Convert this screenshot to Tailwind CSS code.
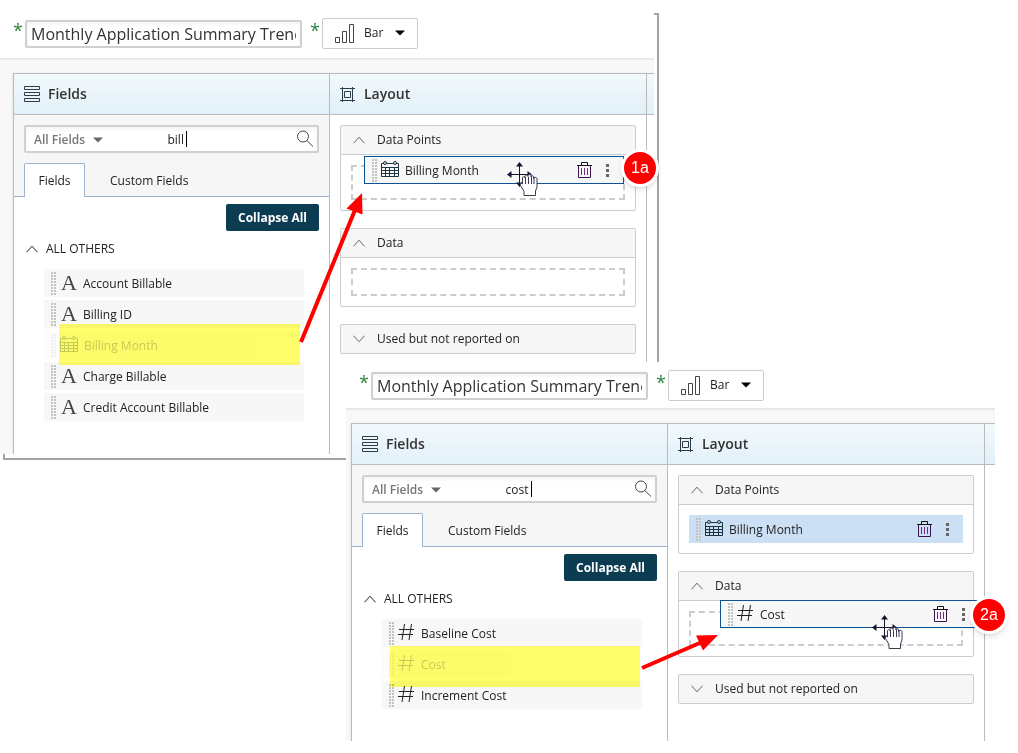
<!DOCTYPE html>
<html lang="en">
<head>
    <meta charset="utf-8">
    <meta name="viewport" content="width=device-width, initial-scale=1">
    <title>Report Fields and Layout</title>
    <script src="https://cdn.jsdelivr.net/npm/@tailwindcss/browser@4"></script>
</head>
<body class="bg-white font-['Open_Sans',sans-serif] text-xs text-[#222]">

<!-- Icons -->
<svg class="hidden">
    <symbol id="bars" viewBox="0 0 21 21"><path d="M1.500 14.500h4v5h-4zM8.500 8.500h4v11h-4zM15.500 1.500h4v18h-4z" fill="none" stroke="#444"/></symbol>
    <symbol id="caret" viewBox="0 0 10 6"><path d="M0 .5h10L5 5.500z" fill="currentColor"/></symbol>
    <symbol id="list" viewBox="0 0 16 16"><path d="M.5.5h15v3H.5zM.5 6.500h15v3H.5zM.5 12.500h15v3H.5z" fill="none" stroke="#2b3c4a"/></symbol>
    <symbol id="frame" viewBox="0 0 16 16"><path d="M2.500 1v15M12.500 1v15M0 2.500h15M0 14.500h15M4.500 5.500h6v6h-6z" fill="none" stroke="#2b3c4a"/></symbol>
    <symbol id="search" viewBox="0 0 18 18"><g fill="none" stroke="#444"><circle cx="7" cy="6.500" r="5.500"/><path d="M10.800 10.500L17 16.500"/></g></symbol>
    <symbol id="up" viewBox="0 0 12 8"><path d="M.5 7.300L6 1.200l5.500 6.100" fill="none" stroke="currentColor"/></symbol>
    <symbol id="down" viewBox="0 0 12 8"><path d="M.5.7L6 6.800 11.500.7" fill="none" stroke="currentColor"/></symbol>
    <symbol id="grip" viewBox="0 0 5 23"><path d="M1 0v23M4 0v23" stroke="#c2c2c2" stroke-width="2" stroke-dasharray="2 1"/></symbol>
    <symbol id="hash" viewBox="0 0 18 18"><path d="M6.500 0L4 16M13.500 0L11 16M1 5.500h15M0 10.500h15" fill="none" stroke="#222"/></symbol>
    <symbol id="calendar" viewBox="0 0 18 18"><g fill="none" stroke="#1c3442"><path d="M.5 2.500h17v13H.5zM.5 6.500h17M.5 9.500h17M.5 12.500h17M4.500 6.500v9M8.500 6.500v9M13.500 6.500v9"/><circle cx="4" cy="2" r="1.500" fill="#ddd"/><circle cx="14" cy="2" r="1.500" fill="#ddd"/></g></symbol>
    <symbol id="trash" viewBox="0 0 15 17"><g fill="none"><path d="M0 3.500h15M4.500 3V.5h6V3" stroke="#111"/><path d="M1.500 4v11.500h12V4" stroke="#3c1450"/><path d="M4.500 6v7M7.500 6v7M10.500 6v7" stroke="#7a2a86"/></g></symbol>
    <symbol id="kebab" viewBox="0 0 3 13"><path d="M0 0h3v3H0zM0 5h3v3H0zM0 10h3v3H0z" fill="#666"/></symbol>
    <symbol id="move" viewBox="0 0 32 35">
        <path d="M12.500 3v20M3 12.500h19" stroke="#14142e" fill="none"/>
        <path d="M12.500 0L9 4.500h7zM0 12.500L4.500 9v7zM25 12.500L20.500 9v7zM12.500 25L9 20.500h7z" fill="#14142e"/>
        <path d="M17 29.500L13.500 23.500c-.6-2 1-3 2-1.500V16c0-2 2.500-2 2.500 0v-1.500c0-2 3-2 3 0V14c0-2 3-2 3 0v1c0-1.800 2.500-1.800 2.500 0v1.500c0-1.500 3.500-1.500 3.500 0V25l-1.500 4v4.500H17z" fill="#fff" stroke="#3a3a55"/>
        <path d="M18.500 15v7M21.500 15v7M24.500 15v7M27 16v6" stroke="#3a3a55" fill="none"/>
    </symbol>
</svg>

<main class="relative min-h-[753px] overflow-hidden">

    <!-- Step 1 -->
    <div class="absolute left-[3px] top-[13px] w-[656px] h-[447px] border-2 border-[#a3a3a3]"></div>
    <section class="absolute left-0 top-0 w-[654px] h-[454px] flex flex-col overflow-hidden bg-white">
        <header class="h-[58px] shrink-0 pt-[18px] pl-[13px] flex items-start">
            <span class="w-3 text-lg leading-6 text-[#2e8540]">*</span>
            <input aria-label="Report name" value="Monthly Application Summary Trend" class="mt-0.5 w-[277px] h-7 px-1 text-base text-[#333] border-2 border-[#d0d0d0] rounded-xs inset-shadow-sm">
            <span class="w-3 ml-2 text-lg leading-6 text-[#2e8540]">*</span>
            <div class="relative">
                <select aria-label="Chart type" class="appearance-none block w-24 h-[31px] pl-[41px] pb-0.5 border border-[#ccc] rounded-xs"><option>Bar</option></select>
                <svg class="absolute left-3 top-[5px] size-[21px] pointer-events-none"><use href="#bars"/></svg>
                <svg class="absolute right-[13px] top-3 w-2.5 h-1.5 text-black pointer-events-none"><use href="#caret"/></svg>
            </div>
        </header>
        <div class="grow flex flex-col pt-3.5 pl-[13px] bg-[#f8f8f8] border-t border-[#e4e4e4] inset-shadow-xs">
            <div class="grow flex bg-white border-t border-[#bbb] shadow-sm">
                <div class="w-[316px] border-l border-[#bbb]">
                    <div class="h-[41px] pl-2.5 flex items-center gap-2 border-b border-[#bbb] bg-linear-to-b from-[#f2f9fc] to-[#e2f0f8]">
                        <svg class="size-4"><use href="#list"/></svg>
                        <h2 class="text-sm font-semibold text-[#333]">Fields</h2>
                    </div>
                    <div class="pt-2.5 bg-[#f6f6f6]">
                        <div class="relative mx-2.5 h-7 flex items-center bg-white border-2 border-[#d0d0d0] rounded-xs inset-shadow-sm">
                            <select aria-label="Field type" class="appearance-none w-36 pl-2 pt-0.5 font-semibold text-[#777]"><option>All Fields</option></select>
                            <svg class="absolute left-[67px] top-[10px] w-2.5 h-1.5 text-[#666] pointer-events-none"><use href="#caret"/></svg>
                            <input aria-label="Search fields" value="bill" class="min-w-0 grow pl-5 pt-0.5">
                            <span class="absolute left-[160px] top-1 w-px h-4 bg-black"></span>
                            <button aria-label="Search" class="mr-[3px]"><svg class="size-[18px]"><use href="#search"/></svg></button>
                        </div>
                        <div class="mt-2.5 pl-2.5 h-[34px] flex items-stretch border-b border-[#9db3d1]">
                            <button class="-mb-px w-[61px] bg-white border border-b-0 border-[#9db3d1] rounded-t-xs">Fields</button>
                            <button class="ml-[25px] pt-0.5">Custom Fields</button>
                        </div>
                    </div>
                    <div class="pt-[7px] pr-2.5 flex justify-end">
                        <button class="w-[93px] h-[27px] rounded-xs bg-[#0c3c52] text-white font-bold">Collapse All</button>
                    </div>
                    <button class="mt-[9px] ml-3 h-[18px] flex items-center gap-2"><svg class="w-3 h-2"><use href="#up"/></svg>ALL OTHERS</button>
                    <ul class="mt-[11px] ml-[30px] mr-[25px] flex flex-col gap-[3px]">
                        <li class="h-7 pl-[7px] flex items-center bg-[#f7f7f7]">
                            <svg class="w-[5px] h-[23px]"><use href="#grip"/></svg>
                            <span class="w-[18px] ml-1 mr-[5px] text-center font-['Liberation_Serif',serif] text-[22px] leading-6 text-[#444]">A</span><span class="pt-0.5">Account Billable</span>
                        </li>
                        <li class="h-7 pl-[7px] flex items-center bg-[#f7f7f7]">
                            <svg class="w-[5px] h-[23px]"><use href="#grip"/></svg>
                            <span class="w-[18px] ml-1 mr-[5px] text-center font-['Liberation_Serif',serif] text-[22px] leading-6 text-[#444]">A</span><span class="pt-0.5">Billing ID</span>
                        </li>
                        <li class="h-7 pl-[7px] flex items-center bg-[#f7f7f7] opacity-25">
                            <svg class="w-[5px] h-[23px]"><use href="#grip"/></svg>
                            <svg class="size-[18px] ml-1 mr-1.5"><use href="#calendar"/></svg><span class="pt-0.5">Billing Month</span>
                        </li>
                        <li class="h-7 pl-[7px] flex items-center bg-[#f7f7f7]">
                            <svg class="w-[5px] h-[23px]"><use href="#grip"/></svg>
                            <span class="w-[18px] ml-1 mr-[5px] text-center font-['Liberation_Serif',serif] text-[22px] leading-6 text-[#444]">A</span><span class="pt-0.5">Charge Billable</span>
                        </li>
                        <li class="h-7 pl-[7px] flex items-center bg-[#f7f7f7]">
                            <svg class="w-[5px] h-[23px]"><use href="#grip"/></svg>
                            <span class="w-[18px] ml-1 mr-[5px] text-center font-['Liberation_Serif',serif] text-[22px] leading-6 text-[#444]">A</span><span class="pt-0.5">Credit Account Billable</span>
                        </li>
                    </ul>
                </div>
                <div class="w-[317px] border-l border-[#bbb]">
                    <div class="h-[41px] pl-2.5 flex items-center gap-2 border-b border-[#bbb] bg-linear-to-b from-[#f2f9fc] to-[#e2f0f8]">
                        <svg class="size-4"><use href="#frame"/></svg>
                        <h2 class="text-sm font-semibold text-[#333]">Layout</h2>
                    </div>
                    <div class="p-2.5 flex flex-col gap-[17px]">
                        <div class="border border-[#ccc] rounded-xs">
                            <button class="w-full h-[29px] pl-3 flex items-center gap-3 bg-[#f6f6f6] border-b border-[#ccc]"><svg class="w-3 h-2 text-[#666]"><use href="#up"/></svg>Data Points</button>
                            <div class="relative m-2.5 h-[35px] border-2 border-dashed border-[#ccc]">
                                <div class="absolute left-[11px] -top-[11px] w-[260px] h-7 pl-[7px] pr-3.5 flex items-center bg-[#f7f7f7] border border-[#0b5394]">
                                    <svg class="w-[5px] h-[23px]"><use href="#grip"/></svg>
                                    <svg class="size-[18px] ml-1 mr-1.5"><use href="#calendar"/></svg><span class="pt-0.5">Billing Month</span>
                                    <button aria-label="Remove" class="ml-auto"><svg class="w-[15px] h-[17px]"><use href="#trash"/></svg></button>
                                    <button aria-label="More" class="ml-3.5"><svg class="w-[3px] h-[13px]"><use href="#kebab"/></svg></button>
                                </div>
                            </div>
                        </div>
                        <div class="border border-[#ccc] rounded-xs">
                            <button class="w-full h-[29px] pl-3 flex items-center gap-3 bg-[#f6f6f6] border-b border-[#ccc]"><svg class="w-3 h-2 text-[#666]"><use href="#up"/></svg>Data</button>
                            <div class="m-2.5 h-7 border-2 border-dashed border-[#ccc]"></div>
                        </div>
                        <button class="h-[30px] pl-3 flex items-center gap-3 bg-[#f6f6f6] border border-[#ccc] rounded-xs"><svg class="w-3 h-2 text-[#666]"><use href="#down"/></svg>Used but not reported on</button>
                    </div>
                </div>
                <div class="grow border-l border-[#bbb]">
                    <div class="h-[41px] border-b border-[#bbb] bg-linear-to-b from-[#f2f9fc] to-[#e2f0f8]"></div>
                </div>
            </div>
        </div>
    </section>

    <!-- Step 2 -->
    <section class="absolute left-[346px] top-[362px] w-[649px] h-[379px] flex flex-col bg-white">
        <header class="h-[46px] shrink-0 pt-2 pl-[13px] flex items-start">
            <span class="w-3 text-lg leading-6 text-[#2e8540]">*</span>
            <input aria-label="Report name" value="Monthly Application Summary Trend" class="mt-0.5 w-[277px] h-7 px-1 text-base text-[#333] border-2 border-[#d0d0d0] rounded-xs inset-shadow-sm">
            <span class="w-3 ml-2 text-lg leading-6 text-[#2e8540]">*</span>
            <div class="relative">
                <select aria-label="Chart type" class="appearance-none block w-24 h-[31px] pl-[41px] pb-0.5 border border-[#ccc] rounded-xs"><option>Bar</option></select>
                <svg class="absolute left-3 top-[5px] size-[21px] pointer-events-none"><use href="#bars"/></svg>
                <svg class="absolute right-[13px] top-3 w-2.5 h-1.5 text-black pointer-events-none"><use href="#caret"/></svg>
            </div>
        </header>
        <div class="grow flex flex-col pt-3.5 pl-[5px] bg-[#f8f8f8] border-t border-[#e4e4e4] inset-shadow-xs overflow-hidden">
            <div class="grow flex bg-white border-t border-[#bbb] shadow-sm">
                <div class="w-[316px] border-l border-[#bbb]">
                    <div class="h-[41px] pl-2.5 flex items-center gap-2 border-b border-[#bbb] bg-linear-to-b from-[#f2f9fc] to-[#e2f0f8]">
                        <svg class="size-4"><use href="#list"/></svg>
                        <h2 class="text-sm font-semibold text-[#333]">Fields</h2>
                    </div>
                    <div class="pt-2.5 bg-[#f6f6f6]">
                        <div class="relative mx-2.5 h-7 flex items-center bg-white border-2 border-[#d0d0d0] rounded-xs inset-shadow-sm">
                            <select aria-label="Field type" class="appearance-none w-36 pl-2 pt-0.5 font-semibold text-[#777]"><option>All Fields</option></select>
                            <svg class="absolute left-[67px] top-[10px] w-2.5 h-1.5 text-[#666] pointer-events-none"><use href="#caret"/></svg>
                            <input aria-label="Search fields" value="cost" class="min-w-0 grow pl-5 pt-0.5">
                            <span class="absolute left-[167px] top-1 w-px h-4 bg-black"></span>
                            <button aria-label="Search" class="mr-[3px]"><svg class="size-[18px]"><use href="#search"/></svg></button>
                        </div>
                        <div class="mt-2.5 pl-2.5 h-[34px] flex items-stretch border-b border-[#9db3d1]">
                            <button class="-mb-px w-[61px] bg-white border border-b-0 border-[#9db3d1] rounded-t-xs">Fields</button>
                            <button class="ml-[25px] pt-0.5">Custom Fields</button>
                        </div>
                    </div>
                    <div class="pt-[7px] pr-2.5 flex justify-end">
                        <button class="w-[93px] h-[27px] rounded-xs bg-[#0c3c52] text-white font-bold">Collapse All</button>
                    </div>
                    <button class="mt-[9px] ml-3 h-[18px] flex items-center gap-2"><svg class="w-3 h-2"><use href="#up"/></svg>ALL OTHERS</button>
                    <ul class="mt-[11px] ml-[30px] mr-[25px] flex flex-col gap-[3px]">
                        <li class="h-7 pl-[7px] flex items-center bg-[#f7f7f7]">
                            <svg class="w-[5px] h-[23px]"><use href="#grip"/></svg>
                            <svg class="size-[18px] ml-1 mr-[5px]"><use href="#hash"/></svg><span class="pt-0.5">Baseline Cost</span>
                        </li>
                        <li class="h-7 pl-[7px] flex items-center bg-[#f7f7f7] opacity-25">
                            <svg class="w-[5px] h-[23px]"><use href="#grip"/></svg>
                            <svg class="size-[18px] ml-1 mr-[5px]"><use href="#hash"/></svg><span class="pt-0.5">Cost</span>
                        </li>
                        <li class="h-7 pl-[7px] flex items-center bg-[#f7f7f7]">
                            <svg class="w-[5px] h-[23px]"><use href="#grip"/></svg>
                            <svg class="size-[18px] ml-1 mr-[5px]"><use href="#hash"/></svg><span class="pt-0.5">Increment Cost</span>
                        </li>
                    </ul>
                </div>
                <div class="w-[317px] border-l border-[#bbb]">
                    <div class="h-[41px] pl-2.5 flex items-center gap-2 border-b border-[#bbb] bg-linear-to-b from-[#f2f9fc] to-[#e2f0f8]">
                        <svg class="size-4"><use href="#frame"/></svg>
                        <h2 class="text-sm font-semibold text-[#333]">Layout</h2>
                    </div>
                    <div class="p-2.5 flex flex-col gap-[17px]">
                        <div class="border border-[#ccc] rounded-xs">
                            <button class="w-full h-[29px] pl-3 flex items-center gap-3 bg-[#f6f6f6] border-b border-[#ccc]"><svg class="w-3 h-2 text-[#666]"><use href="#up"/></svg>Data Points</button>
                            <div class="m-2.5 h-7 pl-[7px] pr-3.5 flex items-center bg-[#cce0f5]">
                                <svg class="w-[5px] h-[23px]"><use href="#grip"/></svg>
                                <svg class="size-[18px] ml-1 mr-1.5"><use href="#calendar"/></svg><span class="pt-0.5">Billing Month</span>
                                <button aria-label="Remove" class="ml-auto"><svg class="w-[15px] h-[17px]"><use href="#trash"/></svg></button>
                                <button aria-label="More" class="ml-3.5"><svg class="w-[3px] h-[13px]"><use href="#kebab"/></svg></button>
                            </div>
                        </div>
                        <div class="border border-[#ccc] rounded-xs">
                            <button class="w-full h-[29px] pl-3 flex items-center gap-3 bg-[#f6f6f6] border-b border-[#ccc]"><svg class="w-3 h-2 text-[#666]"><use href="#up"/></svg>Data</button>
                            <div class="relative m-2.5 h-[35px] border-2 border-dashed border-[#ccc]">
                                <div class="absolute left-[29px] -top-[13px] w-[260px] h-7 pl-[7px] pr-3.5 flex items-center bg-[#f7f7f7] border border-[#0b5394]">
                                    <svg class="w-[5px] h-[23px]"><use href="#grip"/></svg>
                                    <svg class="size-[18px] ml-1 mr-[5px]"><use href="#hash"/></svg><span class="pt-0.5">Cost</span>
                                    <button aria-label="Remove" class="ml-auto"><svg class="w-[15px] h-[17px]"><use href="#trash"/></svg></button>
                                    <button aria-label="More" class="ml-3.5"><svg class="w-[3px] h-[13px]"><use href="#kebab"/></svg></button>
                                </div>
                            </div>
                        </div>
                        <button class="h-[30px] pl-3 flex items-center gap-3 bg-[#f6f6f6] border border-[#ccc] rounded-xs"><svg class="w-3 h-2 text-[#666]"><use href="#down"/></svg>Used but not reported on</button>
                    </div>
                </div>
                <div class="grow border-l border-[#bbb]">
                    <div class="h-[41px] border-b border-[#bbb] bg-linear-to-b from-[#f2f9fc] to-[#e2f0f8]"></div>
                </div>
            </div>
        </div>
    </section>

    <!-- Callouts -->
    <div class="absolute left-[59px] top-[324px] w-[241px] h-[41px] bg-[#ffff6b] mix-blend-multiply"></div>
    <div class="absolute left-[390px] top-[646px] w-[250px] h-[41px] bg-[#ffff6b] mix-blend-multiply"></div>
    <svg class="absolute left-0 top-0 w-[1018px] h-[753px] pointer-events-none" viewBox="0 0 1018 753">
        <path d="M301 342L355 210M642 668L702 642" stroke="#f00" stroke-width="4"/>
        <path d="M362 193L346.500 208.500 362.500 214.500zM718 635L696 635.500 703 650.500z" fill="#f00"/>
    </svg>
    <svg class="absolute left-[507px] top-[162px] w-8 h-[35px]"><use href="#move"/></svg>
    <svg class="absolute left-[872px] top-[615px] w-8 h-[35px]"><use href="#move"/></svg>
    <div class="absolute left-[621px] top-[149px] size-[38px] flex items-center justify-center rounded-full border-3 border-white bg-[#f00] text-white text-base font-['Liberation_Sans',sans-serif] shadow-md">1a</div>
    <div class="absolute left-[970px] top-[596px] size-[38px] flex items-center justify-center rounded-full border-3 border-white bg-[#f00] text-white text-base font-['Liberation_Sans',sans-serif] shadow-md">2a</div>
</main>

</body>
</html>
